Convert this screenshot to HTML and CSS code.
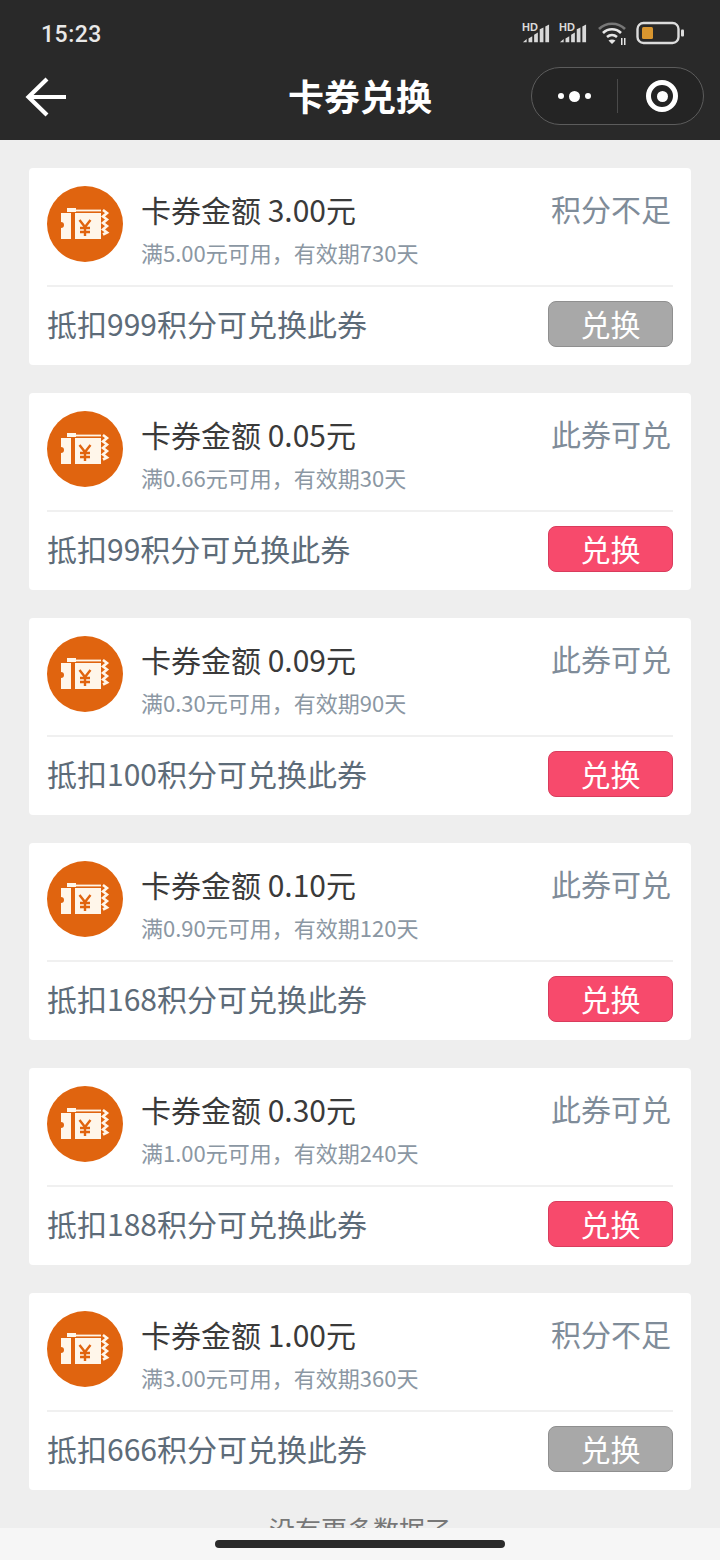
FILE: index.html
```html
<!DOCTYPE html>
<html lang="zh-CN">
<head>
  <meta charset="UTF-8" />
  <meta name="viewport" content="width=device-width, initial-scale=1.0" />
  <title>卡券兑换</title>
  <link rel="stylesheet" href="styles.css">
</head>
<body>
  <svg class="defs" width="0" height="0">
    <symbol id="ticket" viewBox="0 0 76 76">
      <circle cx="38" cy="38" r="38" fill="#e0640f" />
      <path fill="#fff6ea" d="M20 22h9v4h-9zM14 27h10v26H14V42a3 3 0 0 0 0-6zM28 27h26v26H28z" />
      <path fill="none" stroke="#fff6ea" stroke-width="1.800" d="M28 24.500h26" />
      <path fill="none" stroke="#fff6ea" stroke-width="2.600" d="M56 24l4 3-4 3.500 4 3-4 3.500 4 3-4 3.500 4 3-4 2" />
      <path fill="none" stroke="#e0640f" stroke-width="2.400" d="M32.500 34l5.500 7 5.500-7M38 41v9M33 42h10M33 46h10" />
    </symbol>
  </svg>

  <header class="topbar">
    <div class="status">
      <span class="time">15:23</span>
      <div class="status-icons">
        <div class="sim">
          <span class="hd">HD</span>
          <svg width="28" height="22" viewBox="0 0 30 22"><path fill="#d9d9d9" d="M1 21l4-3.500V21zM7 21v-4l4-2.500V21zM13 21v-8l4-2.500V21zM19 21V7l4-2v16zM25 21V4l4-2v19z" /></svg>
        </div>
        <div class="sim">
          <span class="hd">HD</span>
          <svg width="28" height="22" viewBox="0 0 30 22"><path fill="#d9d9d9" d="M1 21l4-3.500V21zM7 21v-4l4-2.500V21zM13 21v-8l4-2.500V21zM19 21V7l4-2v16zM25 21V4l4-2v19z" /></svg>
        </div>
        <svg class="wifi" width="30" height="24" viewBox="0 0 30 24">
          <path fill="none" stroke="#777" stroke-width="2.600" d="M1 8c7-7 19-7 26 0" />
          <path fill="none" stroke="#e6e6e6" stroke-width="2.600" d="M5 12c5-5 13-5 18 0M9 16c3-2.500 7-2.500 10 0" />
          <path fill="#e6e6e6" d="M14 23l-3.500-3.500c2-1.500 5-1.500 7 0zM23 17h1.500v7H23zM26 17h1.500v7H26z" />
        </svg>
        <svg class="battery" width="48" height="24" viewBox="0 0 48 24">
          <rect x="1.500" y="2" width="41" height="20" rx="6" fill="none" stroke="#dcdcdc" stroke-width="2.400" />
          <rect x="6" y="6" width="11" height="12" rx="1.500" fill="#d9962f" />
          <rect x="45" y="8.500" width="3" height="7" rx="1" fill="#dcdcdc" />
        </svg>
      </div>
    </div>
    <div class="navbar">
      <svg class="back" width="44" height="40" viewBox="0 0 44 40">
        <path fill="none" stroke="#fff" stroke-width="4.200" d="M42 20H4M23 2L4.500 20 23 38" />
      </svg>
      <h1 class="title">卡券兑换</h1>
      <div class="capsule">
        <div class="capsule-part">
          <i class="dot"></i><i class="dot dot-big"></i><i class="dot"></i>
        </div>
        <div class="capsule-line"></div>
        <div class="capsule-part">
          <span class="target"></span>
        </div>
      </div>
    </div>
  </header>

  <main class="list">
    <div class="card">
      <div class="card-top">
        <svg class="card-icon" viewBox="0 0 76 76"><use href="#ticket" /></svg>
        <div class="card-info">
          <div class="amount">卡券金额 3.00元</div>
          <div class="rule">满5.00元可用，有效期730天</div>
        </div>
        <div class="state">积分不足</div>
      </div>
      <div class="card-bottom">
        <div class="cost">抵扣999积分可兑换此券</div>
        <button class="btn btn-off">兑换</button>
      </div>
    </div>

    <div class="card">
      <div class="card-top">
        <svg class="card-icon" viewBox="0 0 76 76"><use href="#ticket" /></svg>
        <div class="card-info">
          <div class="amount">卡券金额 0.05元</div>
          <div class="rule">满0.66元可用，有效期30天</div>
        </div>
        <div class="state">此券可兑</div>
      </div>
      <div class="card-bottom">
        <div class="cost">抵扣99积分可兑换此券</div>
        <button class="btn">兑换</button>
      </div>
    </div>

    <div class="card">
      <div class="card-top">
        <svg class="card-icon" viewBox="0 0 76 76"><use href="#ticket" /></svg>
        <div class="card-info">
          <div class="amount">卡券金额 0.09元</div>
          <div class="rule">满0.30元可用，有效期90天</div>
        </div>
        <div class="state">此券可兑</div>
      </div>
      <div class="card-bottom">
        <div class="cost">抵扣100积分可兑换此券</div>
        <button class="btn">兑换</button>
      </div>
    </div>

    <div class="card">
      <div class="card-top">
        <svg class="card-icon" viewBox="0 0 76 76"><use href="#ticket" /></svg>
        <div class="card-info">
          <div class="amount">卡券金额 0.10元</div>
          <div class="rule">满0.90元可用，有效期120天</div>
        </div>
        <div class="state">此券可兑</div>
      </div>
      <div class="card-bottom">
        <div class="cost">抵扣168积分可兑换此券</div>
        <button class="btn">兑换</button>
      </div>
    </div>

    <div class="card">
      <div class="card-top">
        <svg class="card-icon" viewBox="0 0 76 76"><use href="#ticket" /></svg>
        <div class="card-info">
          <div class="amount">卡券金额 0.30元</div>
          <div class="rule">满1.00元可用，有效期240天</div>
        </div>
        <div class="state">此券可兑</div>
      </div>
      <div class="card-bottom">
        <div class="cost">抵扣188积分可兑换此券</div>
        <button class="btn">兑换</button>
      </div>
    </div>

    <div class="card">
      <div class="card-top">
        <svg class="card-icon" viewBox="0 0 76 76"><use href="#ticket" /></svg>
        <div class="card-info">
          <div class="amount">卡券金额 1.00元</div>
          <div class="rule">满3.00元可用，有效期360天</div>
        </div>
        <div class="state">积分不足</div>
      </div>
      <div class="card-bottom">
        <div class="cost">抵扣666积分可兑换此券</div>
        <button class="btn btn-off">兑换</button>
      </div>
    </div>

    <p class="no-more">没有更多数据了</p>
  </main>

  <div class="home-bar"><span class="home-pill"></span></div>
</body>
</html>
```

FILE: styles.css
```css
html, body {
  height: 1560px;
  overflow: hidden;
}
body {
  position: relative;
  margin: 0;
  background-color: #eeeeee;
  font-family: "Noto Sans CJK SC", "Noto Sans", sans-serif;
  color: #333;
}
.defs {
  position: absolute;
}

/* top bar */
.topbar {
  height: 140px;
  background-color: #292929;
  color: #fff;
}
.status {
  height: 60px;
  padding: 6px 36px 0 41px;
  display: flex;
  align-items: center;
  justify-content: space-between;
  box-sizing: border-box;
}
.time {
  margin-top: 2px;
  font-family: Roboto, sans-serif;
  font-size: 23px;
  font-weight: 500;
  letter-spacing: 0.5px;
  color: #e8e8e8;
}
.status-icons {
  display: flex;
  align-items: center;
  gap: 7px;
}
.sim {
  position: relative;
  width: 28px;
  height: 22px;
}
.sim + .sim {
  margin-left: 2px;
}
.sim svg {
  display: block;
}
.hd {
  position: absolute;
  left: 0;
  top: 1px;
  font-family: "Liberation Sans", sans-serif;
  font-size: 11px;
  font-weight: 700;
  line-height: 9px;
  color: #d9d9d9;
}
.wifi {
  margin-left: 4px;
}
.battery {
  margin-left: 1px;
}
.navbar {
  position: relative;
  height: 72px;
  display: flex;
  align-items: center;
  justify-content: space-between;
  padding: 0 16px 0 24px;
}
.back {
  display: block;
  margin-top: 2px;
}
.title {
  position: absolute;
  left: 0;
  right: 0;
  margin: -2px 0 0;
  text-align: center;
  font-size: 36px;
  font-weight: 700;
  line-height: 60px;
}
.capsule {
  position: relative;
  width: 173px;
  height: 58px;
  box-sizing: border-box;
  display: flex;
  align-items: center;
  border: 1px solid #5c5c5c;
  border-radius: 29px;
  background-color: #242424;
}
.capsule-part {
  flex: 1;
  display: flex;
  align-items: center;
  justify-content: center;
  gap: 5px;
}
.capsule-line {
  width: 1px;
  height: 34px;
  background-color: #4a4a4a;
}
.dot {
  width: 6px;
  height: 6px;
  border-radius: 50%;
  background-color: #fff;
}
.dot-big {
  width: 11px;
  height: 11px;
}
.target {
  width: 32px;
  height: 32px;
  margin-left: 3px;
  box-sizing: border-box;
  border: 5px solid #fff;
  border-radius: 50%;
  display: flex;
  align-items: center;
  justify-content: center;
}
.target::after {
  content: "";
  width: 11px;
  height: 11px;
  border-radius: 50%;
  background-color: #fff;
}

/* coupon list */
.list {
  padding: 28px 29px 0;
  display: flex;
  flex-direction: column;
  gap: 28px;
}
.card {
  height: 197px;
  box-sizing: border-box;
  padding: 18px 18px 0;
  background-color: #fff;
  border-radius: 4px;
}
.card-top {
  height: 99px;
  display: flex;
  align-items: flex-start;
  border-bottom: 2px solid #f0f0f0;
}
.card-icon {
  flex: none;
  width: 76px;
  height: 76px;
  margin-right: 18px;
}
.card-info {
  flex: 1;
}
.amount {
  font-size: 30px;
  line-height: 46px;
  color: #3a3a3a;
}
.rule {
  font-size: 22px;
  line-height: 32px;
  margin-top: 4px;
  color: #8b97a3;
}
.state {
  font-size: 30px;
  line-height: 44px;
  margin-right: 2px;
  color: #7f8c99;
}
.card-bottom {
  height: 74px;
  display: flex;
  align-items: center;
  justify-content: space-between;
}
.cost {
  font-size: 30px;
  margin-bottom: 2px;
  color: #5d6b78;
}
.btn {
  width: 125px;
  height: 46px;
  padding: 0 0 2px;
  box-sizing: border-box;
  border: 1px solid #d93c5c;
  border-radius: 8px;
  background-color: #f74a6c;
  color: #fff;
  font-family: inherit;
  font-size: 30px;
  line-height: 42px;
}
.btn-off {
  border-color: #8f8f8f;
  background-color: #a8a8a8;
}
.no-more {
  margin: 0;
  text-align: center;
  font-size: 26px;
  line-height: 22px;
  color: #777;
}

/* gesture bar */
.home-bar {
  position: absolute;
  left: 0;
  right: 0;
  bottom: 0;
  height: 32px;
  background-color: #f6f6f6;
  display: flex;
  align-items: center;
  justify-content: center;
}
.home-pill {
  width: 290px;
  height: 8px;
  border-radius: 4px;
  background-color: #2a2a2a;
}
```
